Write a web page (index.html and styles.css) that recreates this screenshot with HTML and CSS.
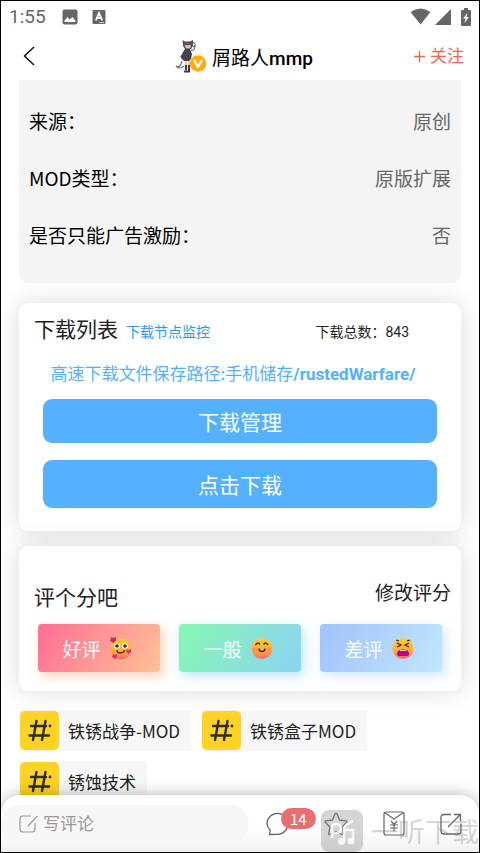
FILE: index.html
```html
<!DOCTYPE html>
<html lang="zh-CN">
<head>
<meta charset="utf-8">
<meta name="viewport" content="width=device-width, initial-scale=1">
<title>屑路人mmp</title>
<link rel="stylesheet" href="styles.css">
</head>
<body>
<div class="app">
  <div class="status">
    <span class="clock">1:55</span>
    <svg class="status-photo" width="16" height="16" viewBox="0 0 16 16"><rect x="0.500" y="0.500" width="15" height="15" rx="2" fill="#666"/><path d="M2.500 13v-1.500l3-3.500 2 2.500L10.500 8l3 4v1z" fill="#fff"/></svg>
    <svg width="14" height="14" viewBox="0 0 14 14"><rect x="0.500" width="13" height="14" rx="1" fill="#666"/><path d="M3.800 10.500L7 3l3.200 7.500M5 8h4" fill="none" stroke="#fff" stroke-width="1.800"/><path d="M7 12.600h5" stroke="#ccc"/></svg>
    <span class="spacer"></span>
    <svg width="21" height="17" viewBox="0 0 21 17"><path d="M0.500 4Q10.500-3 20.500 4L10.500 16.500z" fill="#666"/></svg>
    <svg width="16" height="16" viewBox="0 0 16 16"><path d="M16 0v16H0z" fill="#666"/></svg>
    <svg class="status-battery" width="10" height="18" viewBox="0 0 10 18"><path d="M3 0h4v2h2q1 0 1 1v14q0 1-1 1H1q-1 0-1-1V3q0-1 1-1h2z" fill="#666"/><path d="M6.500 5L2 10.500h2.500L3.500 15 8 9H5.500z" fill="#fff"/></svg>
  </div>

  <header class="header">
    <button class="icon-btn" aria-label="返回"><svg width="12" height="20" viewBox="0 0 12 20"><path d="M11 1L1.500 10 11 19" fill="none" stroke="#111" stroke-width="1.500"/></svg></button>
    <div class="author">
      <svg width="34" height="36" viewBox="0 0 34 36">
        <path d="M8 23Q6 31 2 28q3 4 8 0M19 9q4-2 1-4l-2-1M17 12q4 1 4-4" fill="none" stroke="#6b6468" stroke-width="1.100"/>
        <path d="M9 8l-.5-6L11 3.500h5L19 2v6l-2 3h-6z" fill="#5a4f53"/>
        <path d="M11 7q3 1 6-1v3q-3 3-6 0z" fill="#dfc0b5"/>
        <path d="M9 5q5-2 9 1l-1 2-3-2-4 2z" fill="#63575b"/>
        <path d="M11 11h5l2 5-1 5-2 2h-5l-3-3 2-6z" fill="#46414a"/>
        <path d="M7 19l4-5" stroke="#46414a" stroke-width="2"/>
        <path d="M12 23v5M15 23v5" stroke="#d8c4be" stroke-width="1.800"/>
        <path d="M12 27v5M15 27v6M10 33.500h6" stroke="#3d3940" stroke-width="2"/>
        <circle cx="24" cy="25.500" r="8.300" fill="#ffad0a"/>
        <path d="M20 22l4 7 4-7" fill="none" stroke="#fff" stroke-width="2.200"/>
      </svg>
      <h1>屑路人<b>mmp</b></h1>
    </div>
    <button class="follow"><svg width="11" height="11" viewBox="0 0 11 11"><path d="M5.500 0v11M0 5.500h11" stroke="#ec6459" stroke-width="1.300"/></svg>关注</button>
  </header>

  <main class="content">
    <dl class="info">
      <div class="info-row"><dt>来源：</dt><dd>原创</dd></div>
      <div class="info-row"><dt>MOD类型：</dt><dd>原版扩展</dd></div>
      <div class="info-row"><dt>是否只能广告激励：</dt><dd>否</dd></div>
    </dl>

    <section class="card downloads">
      <div class="card-head">
        <h2>下载列表</h2>
        <a href="#monitor">下载节点监控</a>
        <span class="total">下载总数：843</span>
      </div>
      <p class="path">高速下载文件保存路径<b>:</b>手机储存<b>/rustedWarfare/</b></p>
      <button class="primary">下载管理</button>
      <button class="primary primary-tall">点击下载</button>
    </section>

    <section class="card rating">
      <div class="rating-head">
        <h2>评个分吧</h2>
        <button class="edit">修改评分</button>
      </div>
      <div class="rates">
        <button class="rate rate-good">好评
          <svg width="23" height="24" viewBox="0 0 23 24">
            <defs><linearGradient id="face" x1="0" y1="0" x2="0" y2="1"><stop offset="0" stop-color="#ffce32"/><stop offset="0.600" stop-color="#ffad35"/><stop offset="1" stop-color="#f9667a"/></linearGradient></defs>
            <circle cx="12" cy="13" r="10.500" fill="url(#face)"/>
            <path d="M2 1l2 1 3-1v4L4 7 1 5z" fill="#cf2c5b"/><path d="M18 13l2 1 2-1v3l-2 2-3-2zM4 18l2 1 2-1v3l-2 2-3-2z" fill="#e52d70"/>
            <ellipse cx="8" cy="10" rx="3" ry="2.600" fill="#fff"/><ellipse cx="16" cy="10" rx="3" ry="2.600" fill="#fff"/>
            <circle cx="8" cy="10" r="1.800" fill="#3b2632"/><circle cx="16" cy="10" r="1.800" fill="#3b2632"/>
            <path d="M8 14q0 3 3.500 3t4-3" fill="none" stroke="#3b2632" stroke-width="1.400"/>
          </svg></button>
        <button class="rate rate-ok">一般
          <svg width="23" height="24" viewBox="0 0 23 24">
            <circle cx="12" cy="12.500" r="10.500" fill="url(#face)"/>
            <path d="M5.500 9q2-3.500 4.500-.5M13.500 8.500q2.500-3 4.500.5M9 12.500q0 3 3 3t3-3" fill="none" stroke="#3b2632" stroke-width="1.500"/>
            <circle cx="5" cy="13.500" r="2.300" fill="#ff8a64"/><circle cx="19" cy="13.500" r="2.300" fill="#ff8a64"/>
          </svg></button>
        <button class="rate rate-bad">差评
          <svg width="23" height="24" viewBox="0 0 23 24">
            <circle cx="12" cy="12.500" r="10.500" fill="url(#face)"/>
            <path d="M5 4l3 1M19 4l-3 1M6 7l4 2-4 2M18 7l-4 2 4 2" fill="none" stroke="#3b2632" stroke-width="1.300"/>
            <path d="M6 18q0-4.500 6-4.500t6 4.500q0 2-2 2H8q-2 0-2-2z" fill="#b5008c"/><path d="M9 14.500h6" stroke="#e9d2e6"/>
          </svg></button>
      </div>
    </section>

    <nav class="tags" aria-label="标签">
      <a class="tag" href="#t1"><svg width="39" height="39" viewBox="0 0 39 39"><rect width="39" height="39" rx="5" fill="#ffd322"/><path d="M16.500 10L13 29M25.500 10L22 29M11 15h15M9.500 24.500H29" stroke="#2c2c2c" stroke-width="2.400" stroke-linecap="round"/><circle cx="30" cy="15" r="1.400" fill="#2c2c2c"/></svg><span>铁锈战争-MOD</span></a>
      <a class="tag" href="#t2"><svg width="39" height="39" viewBox="0 0 39 39"><rect width="39" height="39" rx="5" fill="#ffd322"/><path d="M16.500 10L13 29M25.500 10L22 29M11 15h15M9.500 24.500H29" stroke="#2c2c2c" stroke-width="2.400" stroke-linecap="round"/><circle cx="30" cy="15" r="1.400" fill="#2c2c2c"/></svg><span>铁锈盒子MOD</span></a>
      <a class="tag" href="#t3"><svg width="39" height="39" viewBox="0 0 39 39"><rect width="39" height="39" rx="5" fill="#ffd322"/><path d="M16.500 10L13 29M25.500 10L22 29M11 15h15M9.500 24.500H29" stroke="#2c2c2c" stroke-width="2.400" stroke-linecap="round"/><circle cx="30" cy="15" r="1.400" fill="#2c2c2c"/></svg><span>锈蚀技术</span></a>
    </nav>
  </main>

  <footer class="bar">
    <label class="comment">
      <svg width="20" height="18" viewBox="0 0 20 18"><path d="M12 1H4Q1 1 1 4v10q0 3 3 3h9q3 0 3-3V8M9 11l9.500-10" fill="none" stroke="#999" stroke-width="1.200"/></svg>
      <input type="text" placeholder="写评论" aria-label="写评论">
    </label>
    <div class="actions">
      <button class="icon-btn chat" aria-label="评论"><svg width="24" height="24" viewBox="0 0 24 24"><path d="M3.500 22.500L4.200 18Q1 15 1 11.500A10.500 10.500 0 1 1 12 22.300z" fill="none" stroke="#666" stroke-width="1.300" stroke-linejoin="round"/></svg><span class="badge">14</span></button>
      <button class="icon-btn" aria-label="收藏"><svg width="24" height="24" viewBox="0 0 24 24"><path d="M12 1.500q.8 0 1.200 1L15.500 8l6.500.8q1.500.3.500 1.700L18 15l1.300 6.500q.2 1.600-1.300 1L12 19.500l-6 3q-1.500.6-1.300-1L6 15l-4.500-4.500Q.5 9.100 2 8.800L8.500 8l2.300-5.500q.4-1 1.200-1z" fill="none" stroke="#666" stroke-width="1.300" stroke-linejoin="round"/></svg></button>
      <button class="icon-btn" aria-label="打赏"><svg width="22" height="25" viewBox="0 0 22 25"><path d="M3 1h16q2 0 2 2v19q0 2-2 2H3q-2 0-2-2V3q0-2 2-2zM1.500 1.500L11 8l9.500-6.500M8 10l3 3.500 3-3.500M7 14h8M7 17h8M11 13.500v7" fill="none" stroke="#666" stroke-width="1.200"/></svg></button>
      <button class="icon-btn" aria-label="分享"><svg width="22" height="22" viewBox="0 0 22 22"><path d="M11 1.500H4q-3 0-3 3V18q0 3 3 3h14q3 0 3-3v-7M8 14L20.500 1.500M14 1.500h6.500V8" fill="none" stroke="#666" stroke-width="1.300"/></svg></button>
    </div>
  </footer>

  <div class="watermark" aria-hidden="true">
    <svg width="42" height="42" viewBox="0 0 42 42"><rect width="42" height="42" rx="8" fill="#888" fill-opacity="0.350"/><path d="M11 28V17q0-3 4-3 5 0 5 4.500T15 23h-3M23 32V19q0-4 9-8M23 20h9v10" fill="none" stroke="#fff" stroke-opacity="0.800" stroke-width="2.600"/><circle cx="20.500" cy="31.500" r="3.500" fill="#fff" fill-opacity="0.850"/><circle cx="30" cy="31" r="3.500" fill="#fff" fill-opacity="0.850"/></svg>
    <span>一听下载</span>
  </div>
</div>
</body>
</html>
```
FILE: styles.css
```css
* { box-sizing: border-box; }

body, h1, h2, p, dl, dd { margin: 0; }

body {
  font-family: Roboto, "Noto Sans CJK SC", sans-serif;
  font-size: 17px;
  color: #222;
  background: #fff;
}

h1, h2 { font-weight: 400; }

button, input {
  font: inherit;
  color: inherit;
  border: 0;
  padding: 0;
  background: none;
}

a { text-decoration: none; color: inherit; }
svg { display: block; flex: none; }

.app {
  position: relative;
  display: flex;
  flex-direction: column;
  height: 100vh;
  border: 1px solid #000;
  overflow: hidden;
}

.status {
  display: flex;
  align-items: center;
  flex: none;
  height: 31px;
  padding: 0 8px;
  gap: 4px;
  color: #666;
}
.clock { font-size: 19px; }
.status-photo { margin: 0 10px 0 12px; }
.spacer { flex: 1; }
.status-battery { margin-left: 6px; }

.header {
  display: grid;
  grid-template-columns: 1fr auto 1fr;
  align-items: center;
  flex: none;
  height: 48px;
  padding: 0 15px 0 22px;
}
.header .icon-btn { justify-self: start; }
.icon-btn { position: relative; display: block; }
.author { display: flex; align-items: center; gap: 4px; }
.author h1 { font-size: 19px; color: #000; }
.author b { font-weight: 500; }
.follow {
  display: flex;
  align-items: center;
  justify-self: end;
  gap: 5px;
  line-height: 24px;
  color: #ec6459;
}

.content { padding: 0 18px; }

.info {
  padding: 12px 10px 20px;
  background: #f4f4f4;
  border-radius: 0 0 9px 9px;
  font-family: "Noto Sans CJK SC", sans-serif;
  font-size: 19px;
}
.info-row {
  display: flex;
  justify-content: space-between;
  align-items: center;
  height: 57px;
}
.info dt { color: #000; }
.info dd { color: #666; }

.card {
  background: #fff;
  border-radius: 9px;
  box-shadow: 0 0 24px rgba(0, 0, 0, 0.15);
}
.card h2 { font-size: 21px; line-height: 32px; }

.downloads { margin-top: 20px; padding: 11px 24px 23px; }
.card-head {
  display: flex;
  align-items: baseline;
  margin: 0 28px 0 -9px;
  gap: 8px;
  font-size: 14px;
}
.card-head a { color: #2d96f0; }
.total { margin-left: auto; }
.path {
  margin: 16px 0 13px;
  line-height: 24px;
  text-align: center;
  color: #55b0ff;
  padding-right: 14px;
}
.primary {
  display: block;
  width: 100%;
  height: 44px;
  border-radius: 9px;
  background: #55b0ff;
  color: #fff;
  font-size: 21px;
}
.primary-tall { height: 48px; margin-top: 17px; }

.rating { margin-top: 15px; padding: 36px 19px 19px; }
.rating-head {
  display: flex;
  justify-content: space-between;
  align-items: flex-start;
  margin: 0 -9px 10px -4px;
}
.edit { font-size: 19px; line-height: 24px; }
.rates { display: grid; grid-template-columns: repeat(3, 1fr); gap: 19px; }
.rate {
  display: flex;
  align-items: center;
  justify-content: center;
  gap: 8px;
  height: 48px;
  padding-right: 4px;
  border-radius: 4px;
  color: #fff;
  font-size: 19px;
}
.rate-good {
  background: linear-gradient(120deg, #ff6d96, #ffc196);
  box-shadow: 3px 4px 12px rgba(255, 160, 110, 0.5);
}
.rate-ok {
  background: linear-gradient(120deg, #86f8b0, #8dd2f4);
  box-shadow: 3px 4px 12px rgba(120, 205, 235, 0.5);
}
.rate-bad {
  background: linear-gradient(120deg, #a1c2fc, #c1e7fb);
  box-shadow: 3px 4px 12px rgba(165, 205, 255, 0.5);
}

.tags { display: flex; flex-wrap: wrap; gap: 10px; margin-top: 19px; }
.tag {
  display: flex;
  align-items: center;
  height: 41px;
  padding: 0 11px 0 1px;
  gap: 9px;
  background: #f7f7f7;
  font-family: "Noto Sans CJK SC", sans-serif;
}

.bar {
  position: absolute;
  left: 0;
  right: 0;
  bottom: 0;
  display: flex;
  align-items: center;
  height: 57px;
  padding-right: 17px;
  border-radius: 20px 20px 0 0;
  background: linear-gradient(rgba(255, 255, 255, 0.95), #fff 20%, #fff 60%, #f1f1f1);
  box-shadow: 0 0 16px rgba(0, 0, 0, 0.3);
}
.comment {
  display: flex;
  align-items: center;
  flex: 1;
  gap: 4px;
  height: 38px;
  margin-right: 17px;
  padding: 0 18px;
  border-radius: 19px;
  background: #f7f7f7;
}
.comment input { width: 100%; min-width: 0; outline: 0; }
.comment input::placeholder { color: #999; opacity: 1; }
.actions { display: flex; align-items: center; gap: 35px; }
.chat { margin-right: -1px; }
.badge {
  position: absolute;
  left: 15px;
  top: -4px;
  padding: 0 9px;
  border-radius: 11px;
  background: #e76f70;
  color: #fff;
  font-family: "Noto Sans CJK SC", sans-serif;
  font-size: 15px;
  line-height: 21px;
}

.watermark {
  position: absolute;
  right: 0;
  bottom: 0;
  display: flex;
  align-items: flex-end;
  gap: 8px;
  color: rgba(130, 130, 130, 0.35);
  font-size: 27px;
  line-height: 38px;
  white-space: nowrap;
  pointer-events: none;
}
```
